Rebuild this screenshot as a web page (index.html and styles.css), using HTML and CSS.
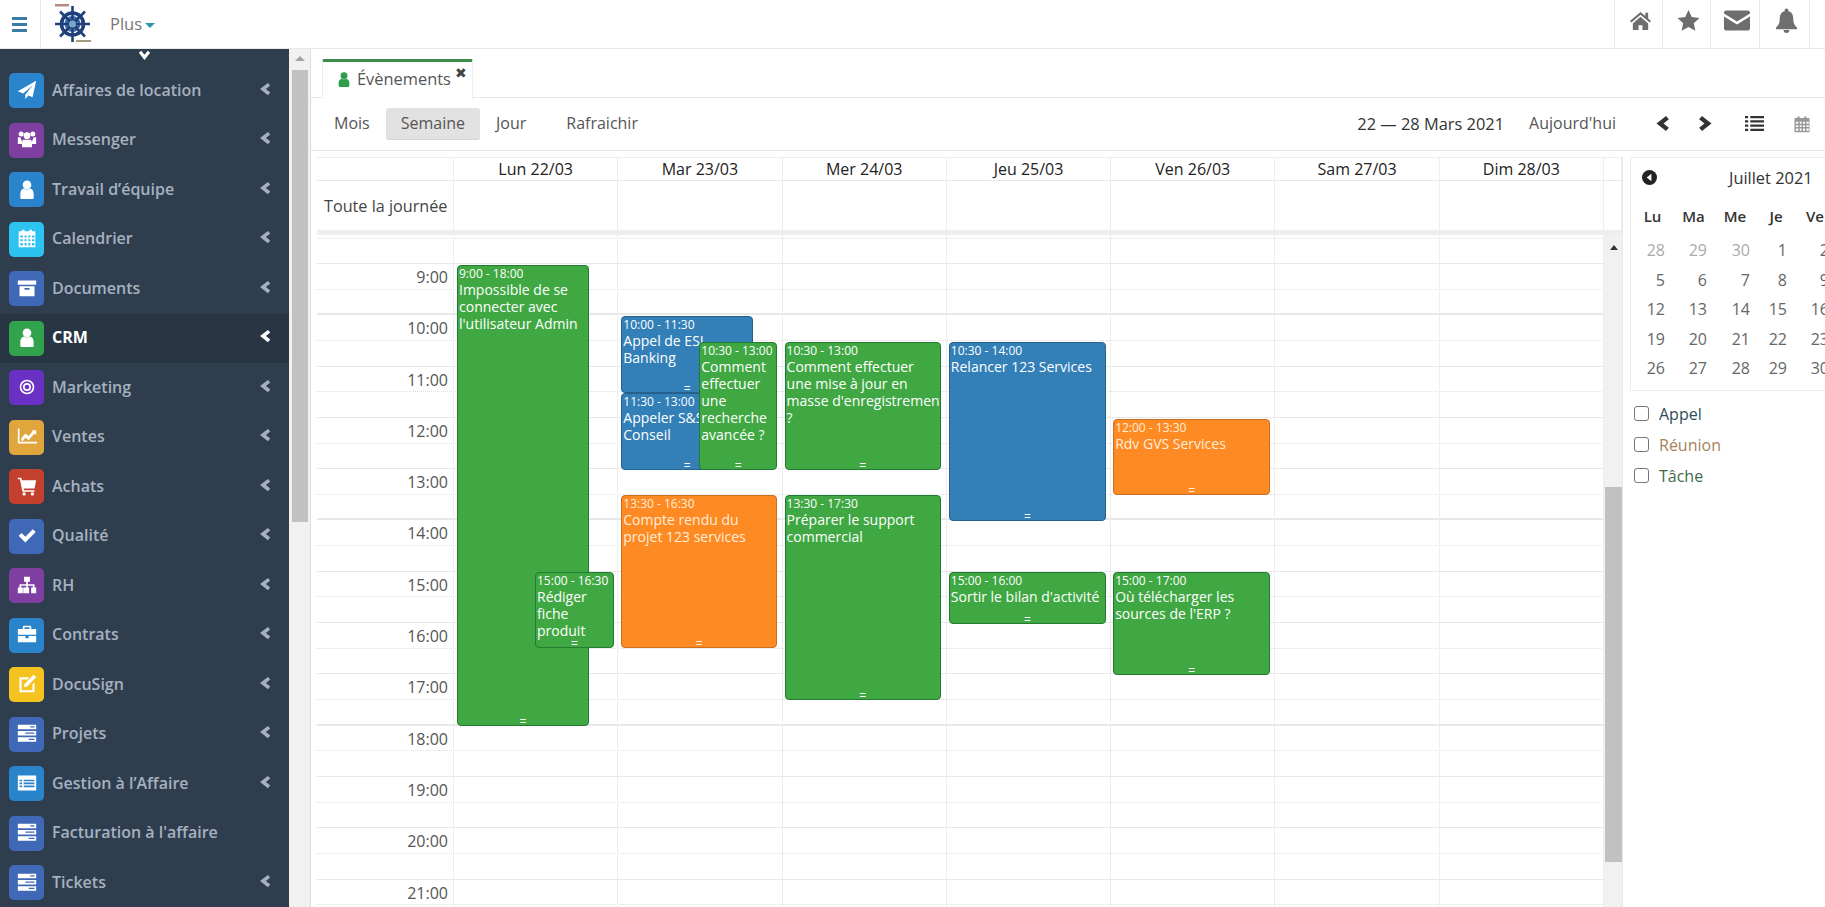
FILE: index.html
```html
<!DOCTYPE html>
<html lang="fr">
<head>
    <meta charset="UTF-8">
    <title>Évènements</title>
    <link rel="stylesheet" href="styles.css">
</head>
<body>
    <!-- icones -->
    <svg class="defs" width="0" height="0">
        <symbol id="i-plane" viewBox="0 0 24 24"><path d="M23 1 1 13.5l6.5 2.7L19 6 10 17.5v5.5l3.7-4.4 5 2.1z"/></symbol>
        <symbol id="i-users" viewBox="0 0 24 24"><circle cx="5" cy="6" r="3"/><circle cx="19" cy="6" r="3"/><circle cx="12" cy="8" r="4"/><path d="M1 10h3l2 5v3H1zM23 10h-3l-2 5v3h5zM7 13h10l1 3v6H6v-6z"/></symbol>
        <symbol id="i-user" viewBox="0 0 24 24"><circle cx="12" cy="7" r="5.2"/><path d="M4 23v-5c0-4 2-6 4.500-6.500 2 1.500 5 1.500 7 0 2.500.5 4.500 2.500 4.500 6.500v5c0 .5-1 1-2 1H6c-1 0-2-.5-2-1z"/></symbol>
        <symbol id="i-cal" viewBox="0 0 24 24"><path fill-rule="evenodd" d="M2 4h4V2h3v2h6V2h3v2h4v19H2zM4 9v2.500h3V9zm5 0v2.500h2.500V9zm4.500 0v2.500H16V9zM18 9v2.500h3V9zM4 13.500V16h3v-2.500zm5 0V16h2.500v-2.500zm4.500 0V16H16v-2.500zm4.500 0V16h3v-2.500zM4 18v3h3v-3zm5 0v3h2.500v-3zm4.500 0v3H16v-3zm4.500 0v3h3v-3z"/></symbol>
        <symbol id="i-box" viewBox="0 0 24 24"><path fill-rule="evenodd" d="M1 3h22v5H1zM3 10h18v12H3zm6 2v2h6v-2z"/></symbol>
        <symbol id="i-target" viewBox="-3 -3 30 30"><path fill-rule="evenodd" d="M12 1a11 11 0 1 1 0 22 11 11 0 0 1 0-22zm0 2.500a8.500 8.500 0 1 0 0 17 8.500 8.500 0 0 0 0-17zM12 6a6 6 0 1 1 0 12 6 6 0 0 1 0-12zm0 2.500a3.500 3.500 0 1 0 0 7 3.500 3.500 0 0 0 0-7z"/></symbol>
        <symbol id="i-chart" viewBox="0 0 24 24"><path d="M1 3h2v16h21v2H1z"/><path d="m5 15 5-6 4 3 5-6-2-1h6v6l-2-2-7 8-4-3-4 5z"/></symbol>
        <symbol id="i-cart" viewBox="0 0 24 24"><path d="M1 2h4l1 3h17l-2 10H8l.5 2H21v2H6.500L3.500 4H1z"/><circle cx="8.500" cy="21.500" r="2"/><circle cx="18.500" cy="21.500" r="2"/></symbol>
        <symbol id="i-check" viewBox="0 0 24 24"><path d="m2 13 3.500-3.500L10 14l9-9 3.500 3.500L10 21z"/></symbol>
        <symbol id="i-site" viewBox="0 0 24 24"><path d="M8.500 2h7v6H13v3h8v4h2v7h-6v-7h2v-2h-6v2h1.500v7h-7v-7H11v-2H5v2h2v7H1v-7h2v-4h8V8H8.500z"/></symbol>
        <symbol id="i-case" viewBox="0 0 24 24"><path fill-rule="evenodd" d="M8 2h8l1 1v3h6v7H1V6h6V3zm1 2v2h6V4zM1 14.500h9V17h4v-2.500h9V22H1z"/></symbol>
        <symbol id="i-edit" viewBox="0 0 24 24"><path d="M3 4h12l-2.500 2.500H5.500v13h13v-7L21 10v12H3z"/><path d="m20 1 3 3-11 11-4 1 1-4z"/></symbol>
        <symbol id="i-server" viewBox="0 0 24 24"><path fill-rule="evenodd" d="M1 2h22v5.500H1zm15 2v1.500h5V4zM1 9.500h22V15H1zm9 2v1.500h11v-1.500zM1 17h22v5.500H1zm13 2v1.500h7V19z"/></symbol>
        <symbol id="i-list" viewBox="0 0 24 24"><path fill-rule="evenodd" d="M1 3h22v18H1zm2 5v2h3V8zm5 0v2h13V8zm-5 3.500v2h3v-2zm5 0v2h13v-2zM3 15v2h3v-2zm5 0v2h13v-2z"/></symbol>
        <symbol id="i-left" viewBox="0 0 24 24"><path d="M17 1.500 21 6l-7.500 6 7.500 6-4 4.500L3.500 12z"/></symbol>
        <symbol id="i-right" viewBox="0 0 24 24"><path d="M7 1.500 3 6l7.500 6L3 18l4 4.500L20.500 12z"/></symbol>
        <symbol id="i-down" viewBox="0 0 24 24"><path d="M1.500 7 6 3l6 7.500L18 3l4.500 4L12 20.500z"/></symbol>
    </svg>

    <div class="topbar">
        <div class="burger"><span></span><span></span><span></span></div>
        <svg class="logo" viewBox="0 0 36 40">
            <rect x="0" y="0" width="14" height="2.500" fill="#b58a80"/>
            <rect x="21" y="36" width="15" height="2" fill="#a69a80"/>
            <circle cx="17.500" cy="20" r="11" fill="none" stroke="#1f3f7a" stroke-width="3.500"/>
            <circle cx="17.500" cy="20" r="8" fill="#3d6ea8"/>
            <path d="M17.500 2v36M0 20h35M5 7.500l25 25M30 7.500l-25 25" stroke="#1f3f7a" stroke-width="2.600"/>
            <circle cx="17.500" cy="20" r="3.500" fill="#7ea4c8"/>
        </svg>
        <div class="plus">Plus<span class="caret"></span></div>
        <div class="top-icons">
            <div class="top-icon">
                <svg viewBox="0 0 24 24"><path d="M12 3 1 12.500l1.500 1.700L12 6l9.500 8.200 1.500-1.700-3-2.600V4h-3v3.300z"/><path d="m12 8-8 7v7h6v-5h4v5h6v-7z"/></svg>
            </div>
            <div class="top-icon">
                <svg viewBox="0 0 24 24"><path d="m12 1 3.400 7.400 8.100.9-6 5.500 1.700 8L12 18.800l-7.200 4 1.700-8-6-5.500 8.100-.9z"/></svg>
            </div>
            <div class="top-icon mail">
                <svg viewBox="0 0 26 20"><path d="M2 0h22c1 0 2 1 2 2v1L13 11 0 3V2c0-1 1-2 2-2z"/><path d="M0 6v12c0 1 1 2 2 2h22c1 0 2-1 2-2V6l-13 8z"/></svg>
            </div>
            <div class="top-icon bell">
                <svg viewBox="0 0 24 26"><circle cx="12" cy="2.500" r="2"/><path d="M12 3c5 0 7 3.500 7 8 0 5 1.500 7 4 9.500V22H1v-1.500C3.500 18 5 16 5 11c0-4.500 2-8 7-8z"/><path d="M9 23h6a3 3 0 0 1-6 0z"/></svg>
            </div>
            <div class="top-icon last"></div>
        </div>
    </div>

    <div class="app">
        <div class="sidebar">
            <div class="side-top"><svg class="ico"><use href="#i-down"/></svg></div>
            <div class="item">
                <div class="tile t-blue"><svg class="ico"><use href="#i-plane"/></svg></div>
                <span class="label">Affaires de location</span>
                <svg class="arrow"><use href="#i-left"/></svg>
            </div>
            <div class="item">
                <div class="tile t-purple"><svg class="ico"><use href="#i-users"/></svg></div>
                <span class="label">Messenger</span>
                <svg class="arrow"><use href="#i-left"/></svg>
            </div>
            <div class="item">
                <div class="tile t-blue"><svg class="ico"><use href="#i-user"/></svg></div>
                <span class="label">Travail d’équipe</span>
                <svg class="arrow"><use href="#i-left"/></svg>
            </div>
            <div class="item">
                <div class="tile t-cyan"><svg class="ico"><use href="#i-cal"/></svg></div>
                <span class="label">Calendrier</span>
                <svg class="arrow"><use href="#i-left"/></svg>
            </div>
            <div class="item">
                <div class="tile t-indigo"><svg class="ico"><use href="#i-box"/></svg></div>
                <span class="label">Documents</span>
                <svg class="arrow"><use href="#i-left"/></svg>
            </div>
            <div class="item active">
                <div class="tile t-green"><svg class="ico"><use href="#i-user"/></svg></div>
                <span class="label">CRM</span>
                <svg class="arrow"><use href="#i-left"/></svg>
            </div>
            <div class="item">
                <div class="tile t-violet"><svg class="ico"><use href="#i-target"/></svg></div>
                <span class="label">Marketing</span>
                <svg class="arrow"><use href="#i-left"/></svg>
            </div>
            <div class="item">
                <div class="tile t-amber"><svg class="ico"><use href="#i-chart"/></svg></div>
                <span class="label">Ventes</span>
                <svg class="arrow"><use href="#i-left"/></svg>
            </div>
            <div class="item">
                <div class="tile t-red"><svg class="ico"><use href="#i-cart"/></svg></div>
                <span class="label">Achats</span>
                <svg class="arrow"><use href="#i-left"/></svg>
            </div>
            <div class="item">
                <div class="tile t-indigo"><svg class="ico"><use href="#i-check"/></svg></div>
                <span class="label">Qualité</span>
                <svg class="arrow"><use href="#i-left"/></svg>
            </div>
            <div class="item">
                <div class="tile t-purple"><svg class="ico"><use href="#i-site"/></svg></div>
                <span class="label">RH</span>
                <svg class="arrow"><use href="#i-left"/></svg>
            </div>
            <div class="item">
                <div class="tile t-blue"><svg class="ico"><use href="#i-case"/></svg></div>
                <span class="label">Contrats</span>
                <svg class="arrow"><use href="#i-left"/></svg>
            </div>
            <div class="item">
                <div class="tile t-yellow"><svg class="ico"><use href="#i-edit"/></svg></div>
                <span class="label">DocuSign</span>
                <svg class="arrow"><use href="#i-left"/></svg>
            </div>
            <div class="item">
                <div class="tile t-indigo"><svg class="ico"><use href="#i-server"/></svg></div>
                <span class="label">Projets</span>
                <svg class="arrow"><use href="#i-left"/></svg>
            </div>
            <div class="item">
                <div class="tile t-blue"><svg class="ico"><use href="#i-list"/></svg></div>
                <span class="label">Gestion à l’Affaire</span>
                <svg class="arrow"><use href="#i-left"/></svg>
            </div>
            <div class="item">
                <div class="tile t-indigo"><svg class="ico"><use href="#i-server"/></svg></div>
                <span class="label">Facturation à l'affaire</span>
            </div>
            <div class="item">
                <div class="tile t-indigo"><svg class="ico"><use href="#i-server"/></svg></div>
                <span class="label">Tickets</span>
                <svg class="arrow"><use href="#i-left"/></svg>
            </div>
        </div>

        <div class="side-scroll">
            <div class="scroll-up"></div>
            <div class="side-thumb"></div>
        </div>

        <div class="main">
            <div class="tabs">
                <div class="tab">
                    <svg class="tab-user"><use href="#i-user"/></svg>
                    <span>Évènements</span>
                    <span class="tab-close">✖</span>
                </div>
            </div>

            <div class="toolbar">
                <div class="btn b-mois">Mois</div>
                <div class="btn on">Semaine</div>
                <div class="btn b-jour">Jour</div>
                <div class="btn">Rafraichir</div>
                <div class="range">22 — 28 Mars 2021</div>
                <div class="today">Aujourd'hui</div>
                <svg class="tool-ico t-prev"><use href="#i-left"/></svg>
                <svg class="tool-ico t-next"><use href="#i-right"/></svg>
                <svg class="tool-list" viewBox="0 0 18 14"><path d="M0 0h3v2H0zM5 0h13v2H5zM0 4h3v2H0zM5 4h13v2H5zM0 8h3v2H0zM5 8h13v2H5zM0 12h3v2H0zM5 12h13v2H5z"/></svg>
                <svg class="tool-cal"><use href="#i-cal"/></svg>
            </div>

            <div class="work">
                <div class="calendar">
                    <div class="cal-head">
                        <div class="head-cell"></div>
                        <div class="head-cell">Lun 22/03</div>
                        <div class="head-cell">Mar 23/03</div>
                        <div class="head-cell">Mer 24/03</div>
                        <div class="head-cell">Jeu 25/03</div>
                        <div class="head-cell">Ven 26/03</div>
                        <div class="head-cell">Sam 27/03</div>
                        <div class="head-cell">Dim 28/03</div>
                        <div class="head-cell"></div>
                    </div>
                    <div class="cal-allday">
                        <div class="allday-cell allday-title">Toute la journée</div>
                        <div class="allday-cell"></div>
                        <div class="allday-cell"></div>
                        <div class="allday-cell"></div>
                        <div class="allday-cell"></div>
                        <div class="allday-cell"></div>
                        <div class="allday-cell"></div>
                        <div class="allday-cell"></div>
                        <div class="allday-cell"></div>
                    </div>
                    <div class="band"></div>
                    <div class="cal-body">
                        <div class="time-area">
                            <div class="lead"><div class="half lead-half"></div></div>
                            <div class="hour major"><div class="half"><span class="time">9:00</span></div></div>
                            <div class="hour"><div class="half"><span class="time">10:00</span></div></div>
                            <div class="hour"><div class="half"><span class="time">11:00</span></div></div>
                            <div class="hour"><div class="half"><span class="time">12:00</span></div></div>
                            <div class="hour major"><div class="half"><span class="time">13:00</span></div></div>
                            <div class="hour"><div class="half"><span class="time">14:00</span></div></div>
                            <div class="hour"><div class="half"><span class="time">15:00</span></div></div>
                            <div class="hour"><div class="half"><span class="time">16:00</span></div></div>
                            <div class="hour major"><div class="half"><span class="time">17:00</span></div></div>
                            <div class="hour"><div class="half"><span class="time">18:00</span></div></div>
                            <div class="hour"><div class="half"><span class="time">19:00</span></div></div>
                            <div class="hour"><div class="half"><span class="time">20:00</span></div></div>
                            <div class="hour"><div class="half"><span class="time">21:00</span></div></div>

                            <div class="cols">
                                <div class="axis"></div>
                                <div class="day">
                                    <div class="ev green" style="top:30px;height:461px;left:3px;width:132px">
                                        <div class="ev-time">9:00 - 18:00</div>
                                        <div class="ev-title">Impossible de se connecter avec l'utilisateur Admin</div>
                                        <div class="ev-grip">=</div>
                                    </div>
                                    <div class="ev green" style="top:337px;height:76px;left:81px;width:79px">
                                        <div class="ev-time">15:00 - 16:30</div>
                                        <div class="ev-title">Rédiger fiche produit</div>
                                        <div class="ev-grip">=</div>
                                    </div>
                                </div>
                                <div class="day">
                                    <div class="ev blue" style="top:81px;height:77px;left:3px;width:132px">
                                        <div class="ev-time">10:00 - 11:30</div>
                                        <div class="ev-title">Appel de ESI Banking</div>
                                        <div class="ev-grip">=</div>
                                    </div>
                                    <div class="ev blue" style="top:158px;height:77px;left:3px;width:132px">
                                        <div class="ev-time">11:30 - 13:00</div>
                                        <div class="ev-title">Appeler S&amp;S Conseil</div>
                                        <div class="ev-grip">=</div>
                                    </div>
                                    <div class="ev green" style="top:107px;height:128px;left:81px;width:78px">
                                        <div class="ev-time">10:30 - 13:00</div>
                                        <div class="ev-title">Comment effectuer une recherche avancée ?</div>
                                        <div class="ev-grip">=</div>
                                    </div>
                                    <div class="ev orange" style="top:260px;height:153px;left:3px;width:156px">
                                        <div class="ev-time">13:30 - 16:30</div>
                                        <div class="ev-title">Compte rendu du projet 123 services</div>
                                        <div class="ev-grip">=</div>
                                    </div>
                                </div>
                                <div class="day">
                                    <div class="ev green" style="top:107px;height:128px;left:2px;width:156px">
                                        <div class="ev-time">10:30 - 13:00</div>
                                        <div class="ev-title">Comment effectuer une mise à jour en masse&nbsp;d'enregistrement ?</div>
                                        <div class="ev-grip">=</div>
                                    </div>
                                    <div class="ev green" style="top:260px;height:205px;left:2px;width:156px">
                                        <div class="ev-time">13:30 - 17:30</div>
                                        <div class="ev-title">Préparer le support commercial</div>
                                        <div class="ev-grip">=</div>
                                    </div>
                                </div>
                                <div class="day">
                                    <div class="ev blue" style="top:107px;height:179px;left:2px;width:157px">
                                        <div class="ev-time">10:30 - 14:00</div>
                                        <div class="ev-title">Relancer 123 Services</div>
                                        <div class="ev-grip">=</div>
                                    </div>
                                    <div class="ev green" style="top:337px;height:52px;left:2px;width:157px">
                                        <div class="ev-time">15:00 - 16:00</div>
                                        <div class="ev-title">Sortir le bilan d'activité</div>
                                        <div class="ev-grip">=</div>
                                    </div>
                                </div>
                                <div class="day">
                                    <div class="ev orange" style="top:184px;height:76px;left:2px;width:157px">
                                        <div class="ev-time">12:00 - 13:30</div>
                                        <div class="ev-title">Rdv GVS Services</div>
                                        <div class="ev-grip">=</div>
                                    </div>
                                    <div class="ev green" style="top:337px;height:103px;left:2px;width:157px">
                                        <div class="ev-time">15:00 - 17:00</div>
                                        <div class="ev-title">Où télécharger les sources de l'ERP ?</div>
                                        <div class="ev-grip">=</div>
                                    </div>
                                </div>
                                <div class="day"></div>
                                <div class="day"></div>
                            </div>
                        </div>
                        <div class="cal-scroll">
                            <div class="cal-up"></div>
                            <div class="cal-thumb"></div>
                        </div>
                    </div>
                </div>

                <div class="side-panel">
                    <div class="mini">
                        <div class="mini-title">
                            <svg class="mini-prev" viewBox="0 0 16 16"><circle cx="8" cy="8" r="8"/><path d="M10 4v8L5 8z" fill="#fff"/></svg>
                            <span>Juillet 2021</span>
                        </div>
                        <div class="mini-days">
                            <span>Lu</span><span>Ma</span><span>Me</span><span>Je</span><span>Ve</span>
                        </div>
                        <div class="mini-week">
                            <span class="old">28</span><span class="old">29</span><span class="old">30</span><span>1</span><span>2</span>
                        </div>
                        <div class="mini-week">
                            <span>5</span><span>6</span><span>7</span><span>8</span><span>9</span>
                        </div>
                        <div class="mini-week">
                            <span>12</span><span>13</span><span>14</span><span>15</span><span>16</span>
                        </div>
                        <div class="mini-week">
                            <span>19</span><span>20</span><span>21</span><span>22</span><span>23</span>
                        </div>
                        <div class="mini-week">
                            <span>26</span><span>27</span><span>28</span><span>29</span><span>30</span>
                        </div>
                    </div>
                    <div class="filter"><span class="box"></span><span class="f-call">Appel</span></div>
                    <div class="filter"><span class="box"></span><span class="f-meet">Réunion</span></div>
                    <div class="filter"><span class="box"></span><span class="f-task">Tâche</span></div>
                </div>
            </div>
        </div>
    </div>
</body>
</html>
```

FILE: styles.css
```css
html, body {
    margin: 0;
    padding: 0;
    height: 100%;
    overflow: hidden;
}

body {
    font-family: "Open Sans", "Liberation Sans", sans-serif;
    font-size: 16px;
    color: #555;
    background-color: #fff;
}

.defs {
    position: absolute;
}

/* barre du haut */
.topbar {
    display: flex;
    align-items: center;
    height: 48px;
    border-bottom: 1px solid #e8e8e8;
}

.burger {
    display: flex;
    flex-direction: column;
    justify-content: center;
    gap: 3px;
    width: 41px;
    height: 48px;
    padding-left: 12px;
    box-sizing: border-box;
    border-right: 1px solid #e8e8e8;
}

.burger span {
    display: block;
    width: 15px;
    height: 3px;
    background-color: #3a7ca5;
}

.logo {
    width: 36px;
    height: 40px;
    margin-left: 14px;
}

.plus {
    margin-left: 19px;
    margin-bottom: 2px;
    color: #777;
    font-size: 16.500px;
}

.caret {
    display: inline-block;
    margin-left: 3px;
    vertical-align: 2px;
    border-left: 5px solid transparent;
    border-right: 5px solid transparent;
    border-top: 5px solid #2a96a8;
}

.top-icons {
    display: flex;
    margin-left: auto;
    height: 48px;
}

.top-icon {
    display: flex;
    align-items: center;
    justify-content: center;
    width: 48px;
    padding-bottom: 8px;
    padding-left: 3px;
    box-sizing: border-box;
    border-left: 1px solid #e8e8e8;
    fill: #6e6e6e;
}

.top-icon svg {
    width: 23px;
    height: 23px;
}

.top-icon.mail {
    width: 49px;
}

.top-icon.mail svg {
    width: 26px;
    height: 21px;
}

.top-icon.bell {
    width: 50px;
}

.top-icon.bell svg {
    width: 23px;
    height: 25px;
}

.top-icon.last {
    width: 16px;
}

.app {
    display: flex;
    height: 858px;
}

/* menu gauche */
.sidebar {
    width: 289px;
    flex-shrink: 0;
    background-color: #2f3e4e;
    overflow: hidden;
}

.side-top {
    display: flex;
    justify-content: center;
    height: 17.200px;
    fill: #fff;
}

.side-top .ico {
    width: 13px;
    height: 13px;
}

.item {
    display: flex;
    align-items: center;
    height: 49.500px;
    padding-left: 9px;
    box-sizing: border-box;
    color: #a6b1c0;
    font-weight: 600;
    fill: #a6b1c0;
}

.item.active {
    background-color: #283643;
    color: #fff;
    fill: #fff;
    font-weight: 700;
}

.tile {
    display: flex;
    align-items: center;
    justify-content: center;
    width: 35px;
    height: 35px;
    border-radius: 5px;
    flex-shrink: 0;
    fill: #fff;
}

.tile .ico {
    width: 20px;
    height: 20px;
    margin-bottom: 2px;
}

.label {
    margin-left: 8px;
    font-size: 16px;
    margin-bottom: 2px;
}

.arrow {
    width: 14px;
    height: 14px;
    margin-left: auto;
    margin-right: 17px;
    margin-bottom: 4px;
}

.t-blue { background-color: #2a84cc; }
.t-purple { background-color: #7f3fa0; }
.t-cyan { background-color: #2cc3f0; }
.t-indigo { background-color: #3f69b6; }
.t-green { background-color: #31a34c; }
.t-violet { background-color: #6a30c4; }
.t-amber { background-color: #e0a63c; }
.t-red { background-color: #c3402f; }
.t-yellow { background-color: #f6c21f; }

.side-scroll {
    width: 22px;
    flex-shrink: 0;
    padding: 0 2px 0 3px;
    box-sizing: border-box;
    background-color: #f1f1f1;
    border-right: 1px solid #ddd;
}

.scroll-up {
    width: 0;
    margin: 7px auto 9px;
    border-left: 5px solid transparent;
    border-right: 5px solid transparent;
    border-bottom: 5px solid #a3a3a3;
}

.side-thumb {
    height: 452px;
    background-color: #c1c1c1;
}

/* zone principale */
.main {
    flex: 1;
    min-width: 0;
    overflow: hidden;
}

.tabs {
    display: flex;
    height: 49px;
    padding: 10px 0 0 11px;
    box-sizing: border-box;
    border-bottom: 1px solid #e8e8e8;
}

.tab {
    display: flex;
    align-items: center;
    width: 151px;
    height: 40px;
    padding: 0 0 4px 13px;
    box-sizing: border-box;
    background-color: #fff;
    border: 1px solid #eee;
    border-top: 3px solid #3c8c4a;
    border-bottom: none;
    border-radius: 2px 2px 0 0;
    color: #555;
    font-size: 16.400px;
}

.tab-user {
    width: 16px;
    height: 16px;
    margin-right: 5px;
    fill: #2f9e4a;
}

.tab-close {
    position: relative;
    top: -6px;
    margin-left: 4px;
    font-size: 14px;
    color: #444;
}

.toolbar {
    display: flex;
    align-items: center;
    height: 53px;
    box-sizing: border-box;
    border-bottom: 1px solid #e8e8e8;
    padding-left: 13px;
    padding-bottom: 1px;
}

.btn {
    height: 32px;
    line-height: 30px;
    padding: 0 15px;
    border-radius: 3px;
    color: #555;
}

.b-mois {
    padding: 0 16px 0 10px;
}

.btn.on {
    background-color: #e2e2e2;
    border-bottom: 1px solid #d5d5d5;
    box-sizing: border-box;
}

.btn.b-jour {
    padding: 0 25px 0 16px;
}

.range {
    margin-left: auto;
    color: #333;
    font-size: 16.400px;
}

.today {
    margin-left: 25px;
    margin-bottom: 2px;
    color: #555;
}

.tool-ico {
    width: 17px;
    height: 17px;
    fill: #333;
}

.t-prev {
    margin-left: 38px;
}

.t-next {
    margin-left: 26px;
}

.tool-list {
    width: 19px;
    height: 15px;
    margin-left: 31px;
    fill: #333;
}

.tool-cal {
    width: 18px;
    height: 18px;
    margin-left: 29px;
    margin-right: 14px;
    fill: #999;
}

.work {
    display: flex;
    padding: 6px 0 0 6px;
    width: 1530px;
    box-sizing: border-box;
}

/* semaine */
.calendar {
    width: 1306px;
    flex-shrink: 0;
    border-right: 1px solid #e8e8e8;
    box-sizing: border-box;
}

.cal-head, .cal-allday {
    display: grid;
    grid-template-columns: 137px repeat(7, 164.290px) 1fr;
}

.cal-head {
    height: 24px;
    box-sizing: border-box;
    border-top: 1px solid #eee;
    border-bottom: 1px solid #e8e8e8;
}

.head-cell {
    border-right: 1px solid #eee;
    text-align: center;
    font-size: 16px;
    font-weight: 500;
    line-height: 22px;
    color: #222;
}

.cal-allday {
    height: 49px;
}

.allday-cell {
    border-right: 1px solid #eee;
}

.allday-title {
    padding-left: 7px;
    line-height: 51px;
    font-size: 16.200px;
    color: #444;
}

.band {
    height: 5px;
    background-color: #eee;
}

.cal-body {
    display: flex;
    height: 672px;
    overflow: hidden;
}

.time-area {
    position: relative;
    width: 1287px;
    flex-shrink: 0;
}

.lead {
    height: 29px;
    box-sizing: border-box;
    border-bottom: 1px solid #e8e8e8;
}

.half {
    height: 25.650px;
    box-sizing: border-box;
    border-bottom: 1px dotted #e0e0e0;
}

.lead-half {
    height: 4px;
}

.hour {
    height: 51.300px;
    box-sizing: border-box;
    border-bottom: 1px solid #e8e8e8;
}

.hour.major {
    border-bottom: 2px solid #e8e8e8;
}

.time {
    display: block;
    width: 131px;
    text-align: right;
    line-height: 27px;
    color: #555;
}

/* colonnes posees sur les lignes d'heures */
.cols {
    position: absolute;
    top: 0;
    left: 0;
    right: 0;
    bottom: 0;
    display: grid;
    grid-template-columns: 137px repeat(7, 164.290px);
}

.axis {
    border-right: 1px solid #eee;
}

.day {
    position: relative;
    border-right: 1px solid #eee;
}

.ev {
    position: absolute;
    padding: 0 1px;
    box-sizing: border-box;
    border: 1px solid;
    border-radius: 4px;
    color: #fff;
    overflow: hidden;
}

.ev.green {
    background-color: #3fa842;
    border-color: #237a33;
}

.ev.blue {
    background-color: #337fb8;
    border-color: #26618e;
}

.ev.orange {
    background-color: #fe8a24;
    border-color: #c8701f;
    color: #ffeeda;
}

.ev-time {
    font-size: 12px;
    line-height: 15px;
}

.ev-title {
    font-size: 14px;
    line-height: 17px;
}

.ev-grip {
    position: absolute;
    left: 0;
    right: 0;
    bottom: 0;
    text-align: center;
    font-size: 12px;
    line-height: 6px;
}

.cal-scroll {
    flex: 1;
    background-color: #f1f1f1;
    padding-left: 1px;
}

.cal-up {
    width: 0;
    margin: 10px auto 237px;
    border-left: 4.500px solid transparent;
    border-right: 4.500px solid transparent;
    border-bottom: 5px solid #333;
}

.cal-thumb {
    height: 375px;
    background-color: #c1c1c1;
}

/* panneau droit */
.side-panel {
    flex: 1;
    padding-left: 7px;
}

.mini {
    height: 234px;
    box-sizing: border-box;
    border: 1px solid #eee;
    color: #333;
}

.mini-title {
    display: flex;
    align-items: center;
    height: 39px;
    padding-left: 11px;
    font-size: 16.400px;
    color: #333;
}

.mini-prev {
    width: 15px;
    height: 15px;
    fill: #222;
    margin-right: 72px;
}

.mini-days {
    display: grid;
    grid-template-columns: 41px 41px 42px 40px 38px;
    height: 39px;
    padding-left: 1px;
    line-height: 38px;
    text-align: center;
    font-size: 15px;
    font-weight: 600;
}

.mini-week {
    display: grid;
    grid-template-columns: 34px 42px 43px 37px 42px;
    height: 29.500px;
    line-height: 29.500px;
    text-align: right;
    color: #666;
}

.mini-week .old {
    color: #aaa;
}

.filter {
    display: flex;
    align-items: center;
    height: 31px;
    padding-left: 4px;
}

.mini + .filter {
    margin-top: 7px;
}

.box {
    width: 13px;
    height: 13px;
    margin-right: 10px;
    border: 1px solid #767676;
    border-radius: 3px;
}

.f-call { color: #2f4d5c; }
.f-meet { color: #a5825a; }
.f-task { color: #3f6b4a; }
```
